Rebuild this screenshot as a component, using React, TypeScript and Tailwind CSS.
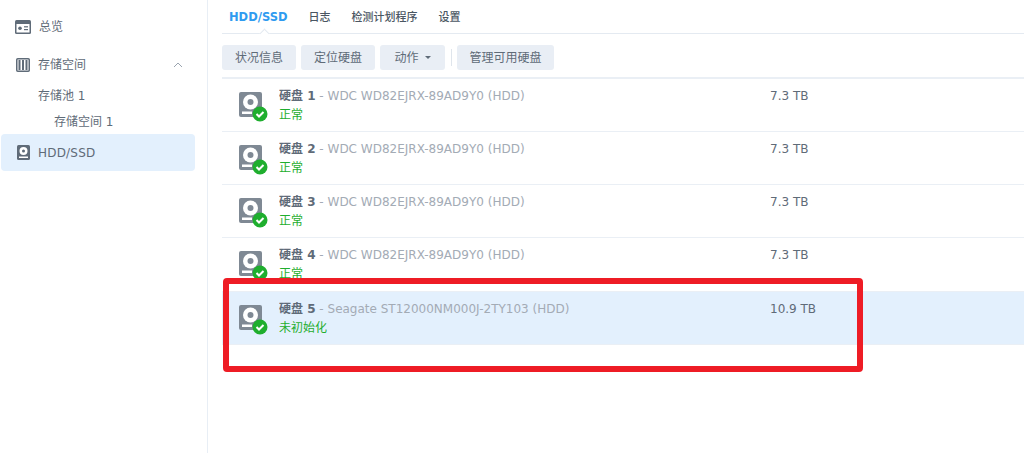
import React from "react";

const CJK = "font-['DejaVu_Sans','Noto_Sans_CJK_SC',sans-serif]";

function DiskIcon() {
  return (
    <svg width="32" height="32" viewBox="0 0 32 32" className="shrink-0">
      <rect x="0" y="2" width="23" height="25" rx="2" fill="#7f8994" />
      <circle cx="11.5" cy="12" r="7.5" fill="#fff" />
      <circle cx="11.5" cy="12" r="3" fill="#7f8994" />
      <rect x="3" y="21.5" width="10" height="2.5" fill="#fff" />
      <circle cx="21" cy="24" r="7.5" fill="#1fae2e" />
      <path d="M17.5 24l2.5 2.5 4.5-4.5" fill="none" stroke="#fff" strokeWidth="2" />
    </svg>
  );
}

const disks = [
  { n: 1, model: "WDC WD82EJRX-89AD9Y0 (HDD)", size: "7.3 TB", status: "正常" },
  { n: 2, model: "WDC WD82EJRX-89AD9Y0 (HDD)", size: "7.3 TB", status: "正常" },
  { n: 3, model: "WDC WD82EJRX-89AD9Y0 (HDD)", size: "7.3 TB", status: "正常" },
  { n: 4, model: "WDC WD82EJRX-89AD9Y0 (HDD)", size: "7.3 TB", status: "正常" },
  { n: 5, model: "Seagate ST12000NM000J-2TY103 (HDD)", size: "10.9 TB", status: "未初始化" },
];

function Button({ children, className = "" }: { children: React.ReactNode; className?: string }) {
  return (
    <div className={`h-[25px] rounded-[3px] bg-[#e9eef5] flex items-center justify-center text-[12px] text-[#5f6b78] ${className}`}>
      {children}
    </div>
  );
}

export default function App() {
  return (
    <div className={`relative w-[1024px] h-[453px] overflow-hidden bg-white flex ${CJK}`}>
      <aside className="w-[208px] shrink-0 border-r border-[#e8eef5] pt-[8px] pl-[1px] text-[12px] text-[#5f6b78]">
        <div className="h-[37px] flex items-center pl-[14px] gap-[8px]">
          <svg width="16" height="14" viewBox="0 0 16 14">
            <rect width="16" height="14" rx="1.5" fill="#5f6b78" />
            <rect x="1.5" y="4" width="13" height="8.5" fill="#fff" />
            <circle cx="5" cy="8.2" r="1.8" fill="#5f6b78" />
            <rect x="9" y="6.2" width="4" height="1.2" fill="#5f6b78" />
            <rect x="9" y="9" width="4" height="1.2" fill="#5f6b78" />
          </svg>
          <span>总览</span>
        </div>
        <div className="h-[38px] mt-[1px] flex items-center pl-[15px] gap-[8px]">
          <svg width="14" height="14" viewBox="0 0 14 14">
            <rect x=".75" y=".75" width="12.5" height="12.5" rx="1" fill="#fff" stroke="#5f6b78" strokeWidth="1.5" />
            <rect x="2.5" y="2" width="2" height="10" fill="#5f6b78" />
            <rect x="6" y="2" width="2" height="10" fill="#5f6b78" />
            <rect x="9.5" y="2" width="2" height="10" fill="#5f6b78" />
          </svg>
          <span>存储空间</span>
          <svg width="10" height="6" viewBox="0 0 10 6" className="ml-[79px]">
            <path d="M1 5l4-4 4 4" fill="none" stroke="#9aa4af" strokeWidth="1" />
          </svg>
        </div>
        <div className="h-[25px] -mt-[1px] flex items-center pl-[37px]">存储池 1</div>
        <div className="h-[25px] mt-[1px] flex items-center pl-[53px]">存储空间 1</div>
        <div className="h-[37px] w-[194px] rounded-[4px] bg-[#e3f0fd] flex items-center pl-[16px] gap-[8px] tracking-[0.2px]">
          <svg width="13" height="15" viewBox="0 0 13 15">
            <rect width="13" height="15" rx="1.5" fill="#5f6b78" />
            <circle cx="6.5" cy="6" r="4" fill="#fff" />
            <circle cx="6.5" cy="6" r="1.5" fill="#5f6b78" />
            <rect x="2" y="11.5" width="9" height="1.5" fill="#fff" />
          </svg>
          <span>HDD/SSD</span>
        </div>
      </aside>

      <main className="flex-1 min-w-0 pl-[14px]">
        <nav className="relative h-[34px] border-b border-[#e4eaf1] flex items-center gap-[21px] pl-[7px] pt-[3px] text-[11px] font-medium text-[#4a5662]">
          <span className="text-[11.5px] font-bold text-[#2f9bf0]">HDD/SSD</span>
          <span>日志</span>
          <span>检测计划程序</span>
          <span>设置</span>
          <span className="absolute left-[39px] bottom-[-4px] w-[7px] h-[7px] bg-white border-l border-t border-[#e4eaf1] rotate-45" />
        </nav>
        <div className="h-[44.8px] border-b-2 border-[#eaeff5] flex items-start pt-[11px] gap-[5px]">
          <Button className="w-[74px]">状况信息</Button>
          <Button className="w-[74px]">定位硬盘</Button>
          <Button className="w-[65px] gap-[6px]">
            动作
            <span className="w-0 h-0 border-x-[3px] border-x-transparent border-t-[3px] border-t-[#5f6b78]" />
          </Button>
          <div className="w-px h-[17px] mt-[4px] bg-[#dfe5ec] ml-[1px]" />
          <Button className="w-[97px]">管理可用硬盘</Button>
        </div>
        <div>
          {disks.map((d) => (
            <div
              key={d.n}
              className={`h-[53.2px] border-b border-[#eaeff5] flex pl-[17px] pt-[11px] ${d.n === 5 ? "bg-[#e3f0fd]" : ""}`}
            >
              <DiskIcon />
              <div className="ml-[8px] w-[491px] -mt-[1px] overflow-hidden">
                <div className="text-[12px] leading-[15px] text-[#a3abb5] whitespace-nowrap">
                  <span className="font-bold text-[#5f6b78]">硬盘 {d.n}</span> - {d.model}
                </div>
                <div className="text-[12px] leading-[15px] mt-[4px] text-[#1fae2e]">{d.status}</div>
              </div>
              <div className="text-[12px] leading-[15px] -mt-[1px] text-[#5f6b78]">{d.size}</div>
            </div>
          ))}
        </div>
      </main>

      <div className="absolute left-[223px] top-[278px] w-[640px] h-[94px] border-[6px] border-[#ee1c25] rounded-[4px]" />
    </div>
  );
}
